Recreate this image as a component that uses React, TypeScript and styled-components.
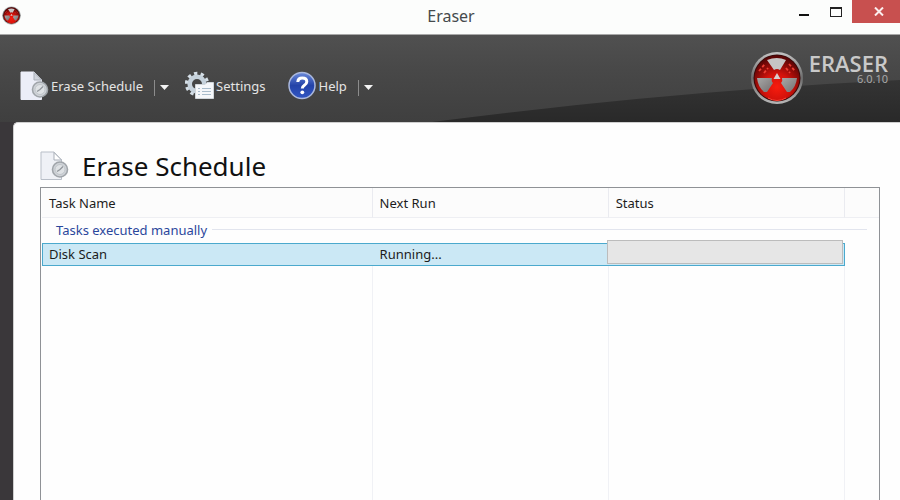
import React from "react";
import styled, { createGlobalStyle } from "styled-components";

const GlobalStyle = createGlobalStyle`
  * { box-sizing: border-box; }
  html, body, #root { height: 100%; }
  body {
    margin: 0;
    overflow: hidden;
    font-family: "Noto Sans", "Open Sans", sans-serif;
    font-size: 13px;
    color: #1c1c1c;
  }
  button { font: inherit; border: 0; padding: 0; background: none; cursor: pointer; }
`;

const Window = styled.div`
  display: flex;
  flex-direction: column;
  min-height: 100vh;
  background: #3a373a;
`;

const TitleBar = styled.header`
  display: grid;
  grid-template-columns: 1fr auto 1fr;
  height: 35px;
  background: #fcfdfc;
  border-bottom: 1px solid #a8a8a8;
`;

const AppIcon = styled.div`
  padding: 6px 0 0 2px;
  line-height: 0;
`;

const WindowTitle = styled.h1`
  margin: 0;
  padding-left: 2px;
  font-size: 16px;
  font-weight: 400;
  line-height: 33px;
  color: #454a4c;
`;

const WindowControls = styled.div`
  display: flex;
  justify-content: flex-end;
  align-items: flex-start;
`;

const WindowButton = styled.button<{ $close?: boolean }>`
  display: flex;
  align-items: center;
  justify-content: center;
  width: ${(p) => (p.$close ? 48 : 32)}px;
  height: 23px;
  background: ${(p) => (p.$close ? "#c8504f" : "transparent")};
`;

const Banner = styled.div`
  position: relative;
  display: flex;
  justify-content: space-between;
  height: 87px;
  padding: 0 12px 0 20px;
  background: linear-gradient(#505050, #484848 40%, #3f3f3f);
`;

const Swoosh = styled.svg`
  position: absolute;
  right: 0;
  bottom: 0;
  width: 52%;
  height: 100%;
`;

const Toolbar = styled.nav`
  position: relative;
  display: flex;
  align-items: center;
  padding-top: 14px;
`;

const ToolGroup = styled.div<{ $gap?: number }>`
  display: flex;
  align-items: center;
  margin-right: ${(p) => p.$gap ?? 0}px;
`;

const ToolButton = styled.button`
  display: flex;
  align-items: center;
  gap: 2px;
  height: 30px;
  color: #e4e4e4;
`;

const ToolLabel = styled.span`
  line-height: 20px;
`;

const MenuArrow = styled.button`
  display: flex;
  align-items: center;
  height: 16px;
  margin: 4px 0 0 11px;
  padding-left: 5px;
  border-left: 1px solid #8c8c8c;
`;

const Brand = styled.div`
  position: relative;
  display: flex;
  align-items: flex-start;
  gap: 5px;
  padding-top: 16px;
`;

const BrandText = styled.div`
  display: flex;
  flex-direction: column;
  align-items: flex-end;
  color: #c9c9c9;
`;

const BrandName = styled.span`
  font-family: "Open Sans", sans-serif;
  font-size: 22px;
  font-weight: 600;
  line-height: 24px;
`;

const BrandVersion = styled.span`
  font-size: 11px;
  line-height: 8px;
  color: #a8a8a8;
`;

const Content = styled.main`
  flex: 1;
  display: flex;
  flex-direction: column;
  margin-left: 13px;
  padding: 26px 20px 0 26px;
  border-left: 1px solid #cfcfcf;
  border-top: 1px solid #cfcfcf;
  border-top-left-radius: 5px;
  background: #fefefe;
`;

const Heading = styled.div`
  display: flex;
  align-items: center;
  gap: 13px;
  height: 38px;
  padding-bottom: 4px;
`;

const HeadingText = styled.h2`
  margin: 0;
  font-size: 26px;
  font-weight: 400;
  line-height: 36px;
  color: #111;
`;

const ListView = styled.div`
  flex: 1;
  display: flex;
  border: 1px solid #8f9296;
  border-bottom: 0;
  padding-left: 1px;
`;

const TaskTable = styled.table`
  flex: 1;
  width: 100%;
  table-layout: fixed;
  border-collapse: separate;
  border-spacing: 0;
`;

const Column = styled.col<{ $width?: string }>`
  width: ${(p) => p.$width ?? "auto"};
`;

const ColumnHeader = styled.th`
  height: 30px;
  padding: 0 7px;
  text-align: left;
  font-weight: 400;
  background: #fcfcfc;
  border-bottom: 1px solid #eeeff3;
  border-right: 1px solid #eaebf0;
  &:last-child { border-right: 0; }
`;

const GroupCell = styled.td`
  height: 25px;
  padding: 0 12px 2px 14px;
`;

const GroupLabel = styled.div`
  display: flex;
  align-items: center;
  gap: 5px;
  line-height: 22px;
  color: #2b479c;
  &::after {
    content: "";
    flex: 1;
    height: 1px;
    background: #e2e5ee;
  }
`;

const TaskCell = styled.td<{ $edge?: "start" | "end" }>`
  position: relative;
  height: 23px;
  padding: 0 7px 2px;
  line-height: 18px;
  background: #cbe8f5;
  border: 1px solid #4ba9cd;
  border-left-width: ${(p) => (p.$edge === "start" ? 1 : 0)}px;
  border-right-width: ${(p) => (p.$edge === "end" ? 1 : 0)}px;
  ${(p) => p.$edge === "start" && "padding-left: 6px;"}
`;

const TaskProgress = styled.progress`
  position: absolute;
  inset: -4px 1px 1px -2px;
  width: calc(100% + 1px);
  height: 24px;
  appearance: none;
  border: 1px solid #bcbcbc;
  background: #e6e6e6;
  &::-webkit-progress-bar { background: #e6e6e6; }
  &::-webkit-progress-value { background: #16b338; }
`;

const FillerCell = styled.td`
  border-right: 1px solid #f0f1f5;
  &:last-child { border-right: 0; }
`;

function RadiationBadge({ size }: { size: number }) {
  const id = `badge${size}`;
  return (
    <svg width={size} height={size} viewBox="0 0 54 54" aria-hidden="true">
      <defs>
        <linearGradient id={`${id}rim`} x1="0" y1="0" x2="0" y2="1">
          <stop offset="0" stopColor="#c4c4c4" />
          <stop offset="0.5" stopColor="#6d6d6d" />
          <stop offset="1" stopColor="#b8b8b8" />
        </linearGradient>
        <radialGradient id={`${id}red`} cx="0.5" cy="0.7" r="0.65">
          <stop offset="0" stopColor="#f81c0e" />
          <stop offset="0.45" stopColor="#d4120b" />
          <stop offset="1" stopColor="#5c0505" />
        </radialGradient>
        <linearGradient id={`${id}blade`} x1="0" y1="0" x2="1" y2="1">
          <stop offset="0" stopColor="#a8a8a8" />
          <stop offset="1" stopColor="#747070" />
        </linearGradient>
      </defs>
      <circle cx="27" cy="27" r="26" fill={`url(#${id}rim)`} />
      <circle cx="27" cy="27" r="23.5" fill="#3a0808" />
      <circle cx="27" cy="27" r="22.5" fill={`url(#${id}red)`} />
      <path d="M24 19 17 9Q27 5 36 9L30 19Q27 17 24 19Z" fill="#c6c4c4" />
      <path d="M22 27H7Q8 36 14 41H17L23 32Q21 30 22 27Z" fill={`url(#${id}blade)`} />
      <path d="M32 27H47Q46 36 40 41H37L31 32Q33 30 32 27Z" fill={`url(#${id}blade)`} />
      <path d="M27 22 30.5 28H23.5Z" fill="#d9cccc" />
      <path d="M9 20 15 13M39 13 45 20M14 22 18 17M36 17 40 22" stroke="#ee3f34" strokeWidth="1.8" strokeDasharray="3 2" />
      <path d="M18 47Q27 52 36 47" fill="none" stroke="#ff4437" strokeWidth="1" />
    </svg>
  );
}

function SchedulePageIcon({ light }: { light?: boolean }) {
  return (
    <svg width="29" height="30" viewBox="0 0 29 30" aria-hidden="true">
      <path
        d="M1 1H14L21.5 9V28.5H1Z"
        fill={light ? "#eceef8" : "#eff1f6"}
        stroke={light ? "#eceef8" : "#b9bfc8"}
      />
      <path d="M14 1.5V9H21.5Z" fill={light ? "#cfd3db" : "#fff"} stroke="#a9afb8" />
      <circle cx="20" cy="18.5" r="7.5" fill="#cfd3d8" stroke="#a0a5aa" strokeWidth="1.6" />
      <circle cx="20" cy="18.5" r="5" fill="#dfe2e5" stroke="#c0c5ca" />
      <path d="M17 20.5 20 18.5 23 15.5" fill="none" stroke="#92979c" strokeWidth="1.3" />
    </svg>
  );
}

function SettingsIcon() {
  return (
    <svg width="29" height="30" viewBox="0 0 29 30" aria-hidden="true">
      <circle cx="12" cy="13" r="10.5" fill="none" stroke="#d5dfe7" strokeWidth="3.4" strokeDasharray="3.3 3.3" />
      <circle cx="12" cy="13" r="7.3" fill="none" stroke="#c6d2dc" strokeWidth="4.6" />
      <path d="M10.5 13.5H20L22 11.5H28.5V27.5H10.5Z" fill="#f5f7fa" stroke="#cfd5da" />
      <path d="M13 17.5H15M17 17.5H26M13 20.5H15M17 20.5H26M13 23.5H15M17 23.5H26" stroke="#a9bccb" />
    </svg>
  );
}

function HelpIcon() {
  return (
    <svg width="29" height="30" viewBox="0 0 29 30" aria-hidden="true">
      <defs>
        <linearGradient id="help" x1="0" y1="0" x2="0" y2="1">
          <stop offset="0" stopColor="#6c8bdb" />
          <stop offset="0.5" stopColor="#2443a8" />
          <stop offset="1" stopColor="#3156c4" />
        </linearGradient>
      </defs>
      <circle cx="14" cy="14.5" r="13" fill="url(#help)" stroke="#aab8dd" strokeWidth="1.5" />
      <path d="M9.8 11Q10 7 14.3 7 18.8 7 18.8 10.7 18.8 12.7 16.4 14.3 14.3 15.7 14.3 17.5" fill="none" stroke="#fff" strokeWidth="3" />
      <circle cx="14.3" cy="21.3" r="1.9" fill="#fff" />
    </svg>
  );
}

function ArrowMenu({ label }: { label: string }) {
  return (
    <MenuArrow aria-label={label}>
      <svg width="9" height="5" viewBox="0 0 9 5" aria-hidden="true">
        <path d="M0 0H9L4.5 5Z" fill="#f4f4f4" />
      </svg>
    </MenuArrow>
  );
}

const tasks = [{ name: "Disk Scan", nextRun: "Running..." }];

export default function App() {
  return (
    <>
      <GlobalStyle />
      <Window>
        <TitleBar>
          <AppIcon>
            <RadiationBadge size={19} />
          </AppIcon>
          <WindowTitle>Eraser</WindowTitle>
          <WindowControls>
            <WindowButton aria-label="Minimize">
              <svg width="10" height="12" viewBox="0 0 10 12">
                <path d="M0 8H10V10H0Z" fill="#111" />
              </svg>
            </WindowButton>
            <WindowButton aria-label="Maximize">
              <svg width="12" height="10" viewBox="0 0 12 10">
                <path d="M0 0H12V10H0ZM1 2V9H11V2Z" fill="#222" fillRule="evenodd" />
              </svg>
            </WindowButton>
            <WindowButton $close aria-label="Close">
              <svg width="16" height="9" viewBox="0 0 16 9">
                <path d="M7 0.5 15 8.5M15 0.5 7 8.5" stroke="#fbeeee" strokeWidth="2" />
              </svg>
            </WindowButton>
          </WindowControls>
        </TitleBar>

        <Banner>
          <Swoosh viewBox="0 0 468 87" preserveAspectRatio="none" aria-hidden="true">
            <defs>
              <linearGradient id="swoosh" x1="0" y1="0" x2="0" y2="1">
                <stop offset="0" stopColor="#343434" />
                <stop offset="1" stopColor="#292929" />
              </linearGradient>
            </defs>
            <path d="M0 87Q240 56 468 45V87Z" fill="url(#swoosh)" />
          </Swoosh>
          <Toolbar>
            <ToolGroup $gap={16}>
              <ToolButton>
                <SchedulePageIcon light />
                <ToolLabel>Erase Schedule</ToolLabel>
              </ToolButton>
              <ArrowMenu label="Erase Schedule menu" />
            </ToolGroup>
            <ToolGroup $gap={22}>
              <ToolButton>
                <SettingsIcon />
                <ToolLabel>Settings</ToolLabel>
              </ToolButton>
            </ToolGroup>
            <ToolGroup>
              <ToolButton>
                <HelpIcon />
                <ToolLabel>Help</ToolLabel>
              </ToolButton>
              <ArrowMenu label="Help menu" />
            </ToolGroup>
          </Toolbar>
          <Brand>
            <RadiationBadge size={54} />
            <BrandText>
              <BrandName>ERASER</BrandName>
              <BrandVersion>6.0.10</BrandVersion>
            </BrandText>
          </Brand>
        </Banner>

        <Content>
          <Heading>
            <SchedulePageIcon />
            <HeadingText>Erase Schedule</HeadingText>
          </Heading>
          <ListView>
            <TaskTable>
              <colgroup>
                <Column $width="39.5%" />
                <Column $width="28.2%" />
                <Column $width="28.2%" />
                <Column />
              </colgroup>
              <thead>
                <tr>
                  <ColumnHeader scope="col">Task Name</ColumnHeader>
                  <ColumnHeader scope="col">Next Run</ColumnHeader>
                  <ColumnHeader scope="col">Status</ColumnHeader>
                  <ColumnHeader aria-hidden="true" />
                </tr>
              </thead>
              <tbody>
                <tr>
                  <GroupCell colSpan={4}>
                    <GroupLabel>Tasks executed manually</GroupLabel>
                  </GroupCell>
                </tr>
                {tasks.map((task) => (
                  <tr key={task.name}>
                    <TaskCell $edge="start">{task.name}</TaskCell>
                    <TaskCell>{task.nextRun}</TaskCell>
                    <TaskCell $edge="end">
                      <TaskProgress value={0} max={100} aria-label={`${task.name} progress`} />
                    </TaskCell>
                    <td />
                  </tr>
                ))}
                <tr>
                  <FillerCell />
                  <FillerCell />
                  <FillerCell />
                  <FillerCell />
                </tr>
              </tbody>
            </TaskTable>
          </ListView>
        </Content>
      </Window>
    </>
  );
}
